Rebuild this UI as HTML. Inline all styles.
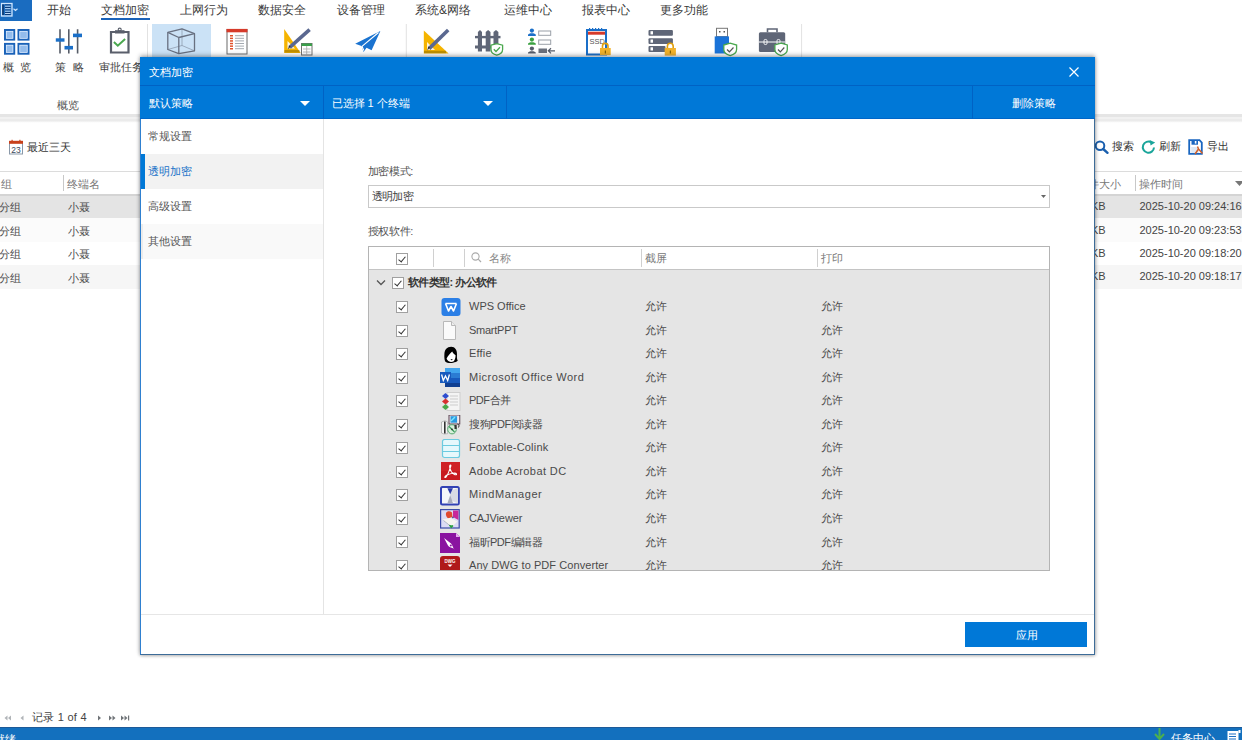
<!DOCTYPE html>
<html><head><meta charset="utf-8">
<style>
*{box-sizing:border-box}
html,body{margin:0;padding:0;width:1242px;height:740px;overflow:hidden;background:#fff;font-family:"Liberation Sans",sans-serif;color:#333}
.a{position:absolute;white-space:nowrap;line-height:1}
.menu{font-size:12px;color:#3a3a3a;top:3.5px}
.t12{font-size:12px}
.t11{font-size:11px}
.hdr{color:#777}
.cb{position:absolute;width:12px;height:12px;border:1px solid #a0a0a0;background:#fff}
.cb:after{content:"";position:absolute;left:3px;top:1px;width:3px;height:6px;border:solid #333;border-width:0 1.3px 1.3px 0;transform:rotate(40deg)}
</style></head><body>

<!-- ============ BACKGROUND APP ============ -->
<!-- top menu -->
<div class="a" style="left:0;top:0;width:32px;height:20.5px;background:#1a6cc0"></div>
<svg class="a" style="left:0;top:0" width="32" height="21" viewBox="0 0 32 21">
 <rect x="1.5" y="3.5" width="10.5" height="12.5" fill="none" stroke="#cfe6ff" stroke-width="1.3"/>
 <path d="M3 4.5V15" stroke="#0a2a5a" stroke-width="1.3"/>
 <path d="M5 5H10.5M5 7.5H10.5M5 10H10.5M5 12.5H10.5M5 14.5H10.5" stroke="#0a3a7a" stroke-width="1"/>
 <path d="M5 6.2H10.5M5 8.7H10.5M5 11.2H10.5M5 13.5H10.5" stroke="#cfe6ff" stroke-width="0.9"/>
 <path d="M13.5 8.8 L15.5 10.5 L17.5 8.8" fill="none" stroke="#cfe6ff" stroke-width="1.2"/>
</svg>
<div class="a menu" style="left:47px">开始</div>
<div class="a menu" style="left:101px">文档加密</div>
<div class="a" style="left:101px;top:18px;width:49px;height:2px;background:#1a62b8"></div>
<div class="a menu" style="left:180px">上网行为</div>
<div class="a menu" style="left:258px">数据安全</div>
<div class="a menu" style="left:337px">设备管理</div>
<div class="a menu" style="left:415px">系统&amp;网络</div>
<div class="a menu" style="left:504px">运维中心</div>
<div class="a menu" style="left:582px">报表中心</div>
<div class="a menu" style="left:660px">更多功能</div>

<!-- ribbon -->
<!-- ribbon icons -->
<div class="a" style="left:152px;top:24px;width:59px;height:34px;background:#cbe2f6"></div>
<svg class="a" style="left:0;top:20px" width="820" height="40" viewBox="0 20 820 40">
 <!-- overview grid -->
 <g stroke="#1a62b8" stroke-width="2" fill="#93bcec">
  <rect x="5" y="30" width="9.2" height="9.6"/><rect x="18.5" y="30" width="10" height="9.6"/>
  <rect x="5" y="43.9" width="9.2" height="9.8"/><rect x="18.5" y="43.9" width="10" height="9.8"/>
 </g>
 <g stroke="#e4efff" stroke-width="0.7" fill="none">
  <rect x="6.3" y="31.3" width="6.6" height="7"/><rect x="19.8" y="31.3" width="7.4" height="7"/>
  <rect x="6.3" y="45.2" width="6.6" height="7.2"/><rect x="19.8" y="45.2" width="7.4" height="7.2"/>
 </g>
 <!-- sliders -->
 <g stroke="#565c68" stroke-width="1.6"><path d="M60 29.3V53.6M68.8 29.3V53.6M77.6 29.3V53.6"/></g>
 <g fill="#1a6fc8"><rect x="55.8" y="38.3" width="8.7" height="3.4"/><rect x="64.5" y="45.9" width="8.5" height="3.6"/><rect x="73" y="33.6" width="9" height="3.6"/></g>
 <!-- clipboard -->
 <path d="M111 32 H128.5 V52.5 H111 Z" fill="#fff" stroke="#5a5f6b" stroke-width="2.2"/>
 <path d="M115 30.2 H124.5 V33.5 H115Z" fill="#5a5f6b"/>
 <circle cx="119.7" cy="29.6" r="1.5" fill="none" stroke="#5a5f6b" stroke-width="1.1"/>
 <path d="M113.9 42 L117.8 45.7 L125.1 38.9" fill="none" stroke="#4aa84e" stroke-width="2"/>
 <!-- cube -->
 <g fill="none" stroke="#687080" stroke-width="1.3" stroke-linejoin="round">
  <path d="M167.8 32.3 L182 28.9 L194.5 33.7 V50.8 L178.8 53.6 L167.8 49.5 Z"/>
  <path d="M167.8 32.3 L178.8 37.5 L194.5 33.7 M178.8 37.5 V53.6"/>
  <path d="M182 28.9 V45.5 L167.8 49.5 M182 45.5 L194.5 50.8" stroke-width="0.8" opacity="0.6"/>
 </g>
 <!-- doc list -->
 <rect x="227" y="29.5" width="20" height="24.5" fill="#fff" stroke="#6a6a6a" stroke-width="1"/>
 <rect x="226.5" y="28.9" width="21" height="3.4" fill="#d63a2a"/>
 <g fill="#e0502a"><rect x="230" y="35" width="3" height="1.5"/><rect x="230" y="37.6" width="3" height="1.5"/><rect x="230" y="40.2" width="3" height="1.5"/><rect x="230" y="42.8" width="3" height="1.5"/><rect x="230" y="45.4" width="3" height="1.5"/><rect x="230" y="48" width="3" height="1.5"/></g>
 <g stroke="#9aa0a8" stroke-width="0.9"><path d="M235 35.7H244M235 38.3H244M235 40.9H244M235 43.5H244M235 46.1H244M235 48.7H244"/></g>
 <!-- ruler pencil table -->
 <path d="M284.2 28.9 V52.9 H300.7 Z" fill="#f5b400"/>
 <path d="M287.5 41 V48.5 H295 Z" fill="#fff" opacity="0.9"/>
 <rect x="284.5" y="50" width="15" height="2.5" fill="#8a6a00" opacity="0.5"/>
 <path d="M309.6 29.6 L289.7 47.4" stroke="#5a6890" stroke-width="3.6" stroke-linecap="butt"/>
 <path d="M290.6 46.6 L288 49.5 L289 45.5Z" fill="#333"/>
 <rect x="301.5" y="43.5" width="10.5" height="11.5" fill="#fff" stroke="#707070" stroke-width="1"/>
 <rect x="301.5" y="43.5" width="10.5" height="2.5" fill="#3aa04a"/>
 <path d="M306.7 46V55M303 49H310.5M303 52H310.5" stroke="#aaa" stroke-width="0.8"/>
 <!-- paper plane -->
 <path d="M380.4 30.9 L355.2 43.7 L361.5 46 L363.6 52.1 L366.5 47.8 L371.6 50.3 Z" fill="#1a73d0"/>
 <path d="M380.4 30.9 L361.5 46 L363.6 52.1 Z" fill="#fff" opacity="0.0"/>
 <path d="M378.5 32.5 L362 46.3 L363.8 50.5" fill="none" stroke="#fff" stroke-width="1.1"/>
 <!-- separators -->
 <path d="M147.5 24 V57 M406.3 24 V57 M801.6 24 V57" stroke="#e2e2e2" stroke-width="1"/>
 <!-- ruler pencil 2 -->
 <path d="M423.8 30.4 V53.4 H448.6 Z" fill="#f5b400"/>
 <path d="M427 42 V50 H435 Z" fill="#fff" opacity="0.85"/>
 <rect x="424" y="50.8" width="22" height="2.4" fill="#8a6a00" opacity="0.5"/>
 <path d="M448.2 30 L429.1 48.6" stroke="#5a6890" stroke-width="3.6"/>
 <path d="M430 47.6 L427.2 50.6 L428.3 46.4Z" fill="#333"/>
 <!-- fence -->
 <g fill="#5f6677">
  <path d="M477.9 32 L480 29.9 L482 32 V51.6 H477.9Z"/>
  <path d="M485.7 32 L488.1 29.9 L490.5 32 V51.6 H485.7Z"/>
  <path d="M493.5 32 L496 29.9 L498.4 32 V51.6 H493.5Z"/>
  <rect x="475" y="35.9" width="25.5" height="2.4"/><rect x="475" y="45.5" width="25.5" height="3"/>
 </g>
 <path d="M491 45.2 L496.8 43.7 L502.6 45.2 V49.5 C502.6 52.5 499.5 54.5 496.8 55.2 C494 54.5 491 52.5 491 49.5Z" fill="#fff" stroke="#4aa84e" stroke-width="1.3"/>
 <path d="M493.8 49.3 L496 51.5 L500 47.3" fill="none" stroke="#4aa84e" stroke-width="1.3"/>
 <!-- users list -->
 <g><circle cx="531.9" cy="30.6" r="2.1" fill="#1a6fc8"/><path d="M528 36 V34.8 C528 32.6 535.8 32.6 535.8 34.8 V36Z" fill="#1a6fc8"/>
 <circle cx="531.9" cy="39.6" r="2.1" fill="#3aa040"/><path d="M528 44.8 V43.8 C528 41.6 535.8 41.6 535.8 43.8 V44.8Z" fill="#3aa040"/>
 <circle cx="531.9" cy="48.6" r="2.1" fill="#555c6a"/><path d="M528 53.6 V52.8 C528 50.6 535.8 50.6 535.8 52.8 V53.6Z" fill="#555c6a"/></g>
 <rect x="538.7" y="31" width="12" height="4.3" fill="none" stroke="#9aa0a8" stroke-width="1"/>
 <rect x="538.7" y="40" width="12" height="4.3" fill="none" stroke="#9aa0a8" stroke-width="1"/>
 <rect x="538.5" y="48.5" width="8.5" height="4.5" fill="#6a707c"/>
 <path d="M555 50.8 H548.5 M551 48.2 L548.3 50.8 L551 53.4" fill="none" stroke="#555c6a" stroke-width="1.2"/>
 <!-- SSD -->
 <rect x="587" y="30" width="19" height="24.5" fill="#fff" stroke="#1a6fc8" stroke-width="2"/>
 <rect x="588" y="31.7" width="17" height="3" fill="#d63a2a"/>
 <g fill="#1a6fc8"><rect x="589" y="28" width="1.2" height="3"/><rect x="592" y="28" width="1.2" height="3"/><rect x="595" y="28" width="1.2" height="3"/><rect x="598" y="28" width="1.2" height="3"/><rect x="601" y="28" width="1.2" height="3"/></g>
 <text x="589.5" y="44.3" font-family="Liberation Sans" font-size="7.5" fill="#555">SSD</text>
 <path d="M602.5 48 V46 C602.5 42.5 608 42.5 608 46 V48" fill="none" stroke="#e0a010" stroke-width="1.6"/>
 <rect x="600" y="48" width="10.7" height="7.2" fill="#f2b22a"/>
 <rect x="604.8" y="50.5" width="1.1" height="3" fill="#7a5a00"/>
 <!-- server -->
 <g fill="#5f6677"><rect x="648.5" y="29.9" width="24.4" height="5.8" rx="1"/><rect x="648.5" y="38.2" width="24.4" height="5.7" rx="1"/><rect x="648.5" y="46" width="17" height="5.9" rx="1"/></g>
 <g fill="#fff"><rect x="650.5" y="31.2" width="2.5" height="3.2"/><rect x="650.5" y="39.5" width="2.5" height="3.2"/><rect x="650.5" y="47.3" width="2.5" height="3.2"/></g>
 <path d="M667.4 48 V46.3 C667.4 42.2 673.2 42.2 673.2 46.3 V48" fill="none" stroke="#e0a010" stroke-width="1.6"/>
 <rect x="664.7" y="48" width="11.2" height="7.6" fill="#f2b22a"/>
 <rect x="669.8" y="50.5" width="1.1" height="3" fill="#7a5a00"/>
 <!-- USB -->
 <rect x="716.5" y="28.3" width="11" height="8.3" fill="#fff" stroke="#777" stroke-width="1"/>
 <rect x="719" y="31" width="1.5" height="1.5" fill="#555"/><rect x="723.5" y="31" width="1.5" height="1.5" fill="#555"/>
 <rect x="714.7" y="36.4" width="14.3" height="17.1" fill="#1a73d8"/>
 <path d="M723.8 45 L730.2 43.2 L736.6 45 V49.5 C736.6 52.6 733.2 54.8 730.2 55.6 C727.2 54.8 723.8 52.6 723.8 49.5Z" fill="#fff" stroke="#4aa84e" stroke-width="1.3"/>
 <path d="M727 49.5 L729.4 51.8 L733.5 47.5" fill="none" stroke="#555" stroke-width="1.2"/>
 <!-- briefcase -->
 <path d="M767.5 32.3 V29 H777 V32.3" fill="none" stroke="#5f6677" stroke-width="1.6"/>
 <rect x="758.9" y="32.3" width="26.3" height="19.6" rx="1.5" fill="#5f6677"/>
 <path d="M759 42 H785" stroke="#fff" stroke-width="1"/>
 <rect x="764" y="39.5" width="3" height="5" rx="1.2" fill="none" stroke="#fff" stroke-width="0.9"/>
 <rect x="777" y="39.5" width="3" height="5" rx="1.2" fill="none" stroke="#fff" stroke-width="0.9"/>
 <path d="M774.9 45 L781.1 43.2 L787.3 45 V49.5 C787.3 52.6 784 54.8 781.1 55.6 C778.2 54.8 774.9 52.6 774.9 49.5Z" fill="#fff" stroke="#4aa84e" stroke-width="1.3"/>
 <path d="M778 49.5 L780.3 51.8 L784.3 47.5" fill="none" stroke="#555" stroke-width="1.2"/>
</svg>
<div class="a t11" style="left:3px;top:62px;color:#444">概</div>
<div class="a t11" style="left:20px;top:62px;color:#444">览</div>
<div class="a t11" style="left:55px;top:62px;color:#444">策</div>
<div class="a t11" style="left:72.5px;top:62px;color:#444">略</div>
<div class="a t11" style="left:99px;top:62px;color:#444">审批任务</div>
<div class="a t11" style="left:57px;top:100px;color:#555">概览</div>


<!-- below ribbon line -->
<div class="a" style="left:0;top:113.5px;width:1242px;height:9px;background:linear-gradient(#e5e5e5 0,#e5e5e5 2.5px,#f1f1f1 2.5px,#f1f1f1 5px,#ebebeb 5px,#ebebeb 7px,#fafafa 8px,#fff 9px)"></div>


<!-- toolbar -->
<svg class="a" style="left:8px;top:139px" width="16" height="16" viewBox="0 0 16 16">
 <rect x="1.5" y="2.5" width="13" height="12.5" fill="#fff" stroke="#8a98a8" stroke-width="1"/>
 <rect x="1" y="1.8" width="14" height="3" fill="#c8401a"/>
 <rect x="3.5" y="0.8" width="1.2" height="2" fill="#c8401a"/><rect x="11.3" y="0.8" width="1.2" height="2" fill="#c8401a"/>
 <text x="8" y="13.5" font-family="Liberation Sans" font-size="8.5" fill="#3a4a5a" text-anchor="middle">23</text>
</svg>
<div class="a t11" style="left:26.5px;top:141.5px;color:#333">最近三天</div>
<!-- search -->
<svg class="a" style="left:1094px;top:140px" width="16" height="14" viewBox="0 0 16 14">
 <circle cx="6" cy="5.8" r="4.3" fill="none" stroke="#1a5fae" stroke-width="2"/>
 <path d="M9.2 9 L13.5 12.8" stroke="#1a5fae" stroke-width="2.4" stroke-linecap="round"/>
</svg>
<div class="a t11" style="left:1112px;top:141px;color:#333">搜索</div>
<!-- refresh -->
<svg class="a" style="left:1141px;top:139px" width="16" height="16" viewBox="0 0 16 16">
 <path d="M13 8.5 A5.6 5.6 0 1 1 10.2 3.3" fill="none" stroke="#1aa59a" stroke-width="2"/>
 <path d="M8.6 1 L14.2 3.6 L9.6 6.6 Z" fill="#1aa59a"/>
</svg>
<div class="a t11" style="left:1159px;top:141px;color:#333">刷新</div>
<!-- export -->
<svg class="a" style="left:1188px;top:139px" width="16" height="16" viewBox="0 0 16 16">
 <path d="M1.2 1.2 H11.5 L13.8 3.5 V14.8 H1.2 Z" fill="#fff" stroke="#1a66c0" stroke-width="1.8"/>
 <rect x="3.5" y="1.2" width="6.5" height="4.5" fill="#1a66c0"/>
 <rect x="6.8" y="2" width="1.6" height="2.6" fill="#fff"/>
 <rect x="3.2" y="8" width="7.5" height="6" fill="#dde8f5"/>
 <path d="M7 15 L10.5 10 L14.5 14.5 M10.5 10 L9.5 7.5" fill="none" stroke="#d0602a" stroke-width="1.5"/>
</svg>
<div class="a t11" style="left:1206.5px;top:141px;color:#333">导出</div>


<!-- table -->
<div class="a" style="left:0;top:171px;width:1242px;height:1px;background:#dcdcdc"></div>
<div class="a" style="left:0;top:194px;width:1242px;height:2px;background:#d4d4d4"></div>
<div class="a" style="left:63px;top:175px;width:1px;height:16px;background:#c8c8c8"></div>
<div class="a" style="left:1135px;top:175px;width:1px;height:16px;background:#c8c8c8"></div>
<div class="a t11 hdr" style="left:0.5px;top:179px">组</div>
<div class="a t11 hdr" style="left:67.3px;top:179px">终端名</div>
<div class="a t11 hdr" style="left:1088px;top:179px">件大小</div>
<div class="a t11 hdr" style="left:1139px;top:179px">操作时间</div>
<svg class="a" style="left:1235px;top:181px" width="9" height="6"><path d="M0 0H9L4.5 5Z" fill="#777"/></svg>

<div class="a" style="left:0;top:196px;width:1242px;height:22px;background:#e4e4e4"></div>
<div class="a" style="left:0;top:218px;width:1242px;height:23.5px;background:#fbfbfb"></div>
<div class="a" style="left:0;top:241.5px;width:1242px;height:23.5px;background:#fff"></div>
<div class="a" style="left:0;top:265px;width:1242px;height:23.5px;background:#f6f6f6"></div>
<div class="a t11" style="left:-1px;top:202.2px;color:#4c4c4c">分组</div>
<div class="a t11" style="left:67.5px;top:202.2px;color:#4c4c4c">小聂</div>
<div class="a t11" style="left:-1px;top:225.7px;color:#4c4c4c">分组</div>
<div class="a t11" style="left:67.5px;top:225.7px;color:#4c4c4c">小聂</div>
<div class="a t11" style="left:-1px;top:249.1px;color:#4c4c4c">分组</div>
<div class="a t11" style="left:67.5px;top:249.1px;color:#4c4c4c">小聂</div>
<div class="a t11" style="left:-1px;top:272.5px;color:#4c4c4c">分组</div>
<div class="a t11" style="left:67.5px;top:272.5px;color:#4c4c4c">小聂</div>
<div class="a t11" style="left:1091px;top:201px;color:#444">KB</div>
<div class="a t11" style="left:1139.5px;top:201px;color:#444">2025-10-20 09:24:16</div>
<div class="a t11" style="left:1091px;top:224.5px;color:#444">KB</div>
<div class="a t11" style="left:1139.5px;top:224.5px;color:#444">2025-10-20 09:23:53</div>
<div class="a t11" style="left:1091px;top:248px;color:#444">KB</div>
<div class="a t11" style="left:1139.5px;top:248px;color:#444">2025-10-20 09:18:20</div>
<div class="a t11" style="left:1091px;top:271.4px;color:#444">KB</div>
<div class="a t11" style="left:1139.5px;top:271.4px;color:#444">2025-10-20 09:18:17</div>

<!-- pager -->
<svg class="a" style="left:0;top:710px" width="140" height="16" viewBox="0 0 140 16">
 <g fill="#b0b4b8">
  <path d="M7.5 5.5 V10.5 L4.5 8Z"/><path d="M11 5.5 V10.5 L8 8Z"/>
  <path d="M23.5 5.5 V10.5 L20.5 8Z"/>
 </g>
 <g fill="#707478">
  <path d="M98 5.5 V10.5 L101 8Z"/>
  <path d="M109 5.5 V10.5 L112 8Z"/><path d="M112.5 5.5 V10.5 L115.5 8Z"/>
  <path d="M121 5.5 V10.5 L124 8Z"/><path d="M124.5 5.5 V10.5 L127.5 8Z"/><rect x="128" y="5.5" width="1.2" height="5"/>
 </g>
</svg>

<div class="a t11" style="left:32px;top:712px;color:#444;letter-spacing:0.25px">记录 1 of 4</div>

<!-- status bar -->
<div class="a" style="left:0;top:727px;width:1242px;height:13px;background:#1370be;overflow:hidden;border-top:1px solid #1d5a98">
<div class="a t11" style="left:-6px;top:5.5px;color:#fff">就绪</div>
<svg class="a" style="left:1153px;top:0px" width="13" height="13" viewBox="0 0 13 13"><path d="M6.5 0 V11 M2 6 L6.5 11 L11 6" fill="none" stroke="#4caf50" stroke-width="2"/></svg>
<div class="a t11" style="left:1171px;top:5px;color:#fff">任务中心</div>
<svg class="a" style="left:1227px;top:2px" width="14" height="11" viewBox="0 0 14 11"><rect x="0.5" y="1" width="11" height="10" fill="#fff"/><path d="M2 4H9M2 6.5H9M2 9H9" stroke="#1a6fc4" stroke-width="1"/><rect x="11.5" y="0" width="2" height="3" fill="#fff"/></svg>
</div>

<!-- ============ DIALOG ============ -->
<div class="a" style="left:140px;top:57px;width:955px;height:598px;box-shadow:0 -2px 4px rgba(40,50,60,0.35),1px 1px 3px rgba(0,0,0,0.15),-1px 1px 3px rgba(0,0,0,0.15);background:#fff;border:1px solid #2f80d0;border-bottom-color:#3d6c98;border-right-color:#3d6c98"></div>
<div class="a" style="left:140px;top:57px;width:955px;height:28px;background:#0078d7"></div>
<div class="a" style="left:140px;top:85px;width:955px;height:1px;background:#0062c4"></div>
<div class="a" style="left:140px;top:86px;width:955px;height:33px;background:#0078d7"></div>
<div class="a" style="left:140px;top:117.5px;width:955px;height:1px;background:#0066c8"></div>
<div class="a t11" style="left:148.5px;top:67px;color:#fff">文档加密</div>

<!-- sections -->
<!-- close X -->
<svg class="a" style="left:1069px;top:67px" width="10" height="10" viewBox="0 0 10 10"><path d="M0.5 0.5L9.5 9.5M9.5 0.5L0.5 9.5" stroke="#fff" stroke-width="1.2"/></svg>
<!-- second bar -->
<div class="a t11" style="left:148.5px;top:97.8px;color:#fff">默认策略</div>
<svg class="a" style="left:300px;top:101px" width="10" height="5"><path d="M0 0H10L5 5Z" fill="#fff"/></svg>
<div class="a" style="left:323px;top:86px;width:1px;height:33px;background:#0062c4"></div>
<div class="a t11" style="left:331.5px;top:98.3px;color:#fff">已选择 1 个终端</div>
<svg class="a" style="left:483px;top:101px" width="10" height="5"><path d="M0 0H10L5 5Z" fill="#fff"/></svg>
<div class="a" style="left:506px;top:86px;width:1px;height:33px;background:#0062c4"></div>
<div class="a" style="left:972px;top:86px;width:1px;height:33px;background:#0062c4"></div>
<div class="a t11" style="left:1012px;top:98.3px;color:#fff">删除策略</div>

<!-- left nav -->
<div class="a" style="left:141px;top:154px;width:182px;height:35px;background:#f2f2f2"></div>
<div class="a" style="left:141px;top:154px;width:4px;height:35px;background:#0078d7"></div>
<div class="a" style="left:141px;top:224px;width:182px;height:35px;background:#f9f9f9"></div>
<div class="a" style="left:141px;top:224px;width:2px;height:35px;background:#ececec"></div>
<div class="a t11" style="left:148px;top:131px;color:#555">常规设置</div>
<div class="a t11" style="left:148px;top:166px;color:#1a73c8">透明加密</div>
<div class="a t11" style="left:148px;top:201px;color:#555">高级设置</div>
<div class="a t11" style="left:148px;top:236px;color:#555">其他设置</div>
<div class="a" style="left:323px;top:119px;width:1px;height:496px;background:#e4e4e4"></div>

<div class="a" style="left:141px;top:614px;width:953px;height:1px;background:#e6e6e6"></div>
<div class="a" style="left:965px;top:622px;width:122px;height:24.5px;background:#0078d7"></div>
<div class="a t11" style="left:1015.5px;top:630px;color:#fff">应用</div>
<!-- content -->
<div class="a t11" style="left:367.5px;top:165.8px;color:#555;letter-spacing:-0.3px">加密模式:</div>
<div class="a" style="left:368px;top:185px;width:682px;height:23px;border:1px solid #c9c9c9;background:#fff"></div>
<div class="a t11" style="left:371.5px;top:190.8px;color:#444;letter-spacing:-0.6px">透明加密</div>
<svg class="a" style="left:1041px;top:195px" width="5" height="3"><path d="M0 0H5L2.5 3Z" fill="#666"/></svg>
<div class="a t11" style="left:367.5px;top:225.5px;color:#555;letter-spacing:-0.3px">授权软件:</div>

<!-- grid -->
<div class="a" style="left:368px;top:246px;width:682px;height:325px;border:1px solid #b4b4b4;background:#e5e5e5"></div>
<div class="a" style="left:369px;top:247px;width:680px;height:23px;background:#fff;border-bottom:1px solid #c4c4c4"></div>
<div class="a" style="left:433px;top:249px;width:1px;height:18px;background:#d0d0d0"></div>
<div class="a" style="left:464px;top:249px;width:1px;height:18px;background:#d0d0d0"></div>
<div class="a" style="left:641px;top:249px;width:1px;height:18px;background:#d0d0d0"></div>
<div class="a" style="left:817px;top:249px;width:1px;height:18px;background:#d0d0d0"></div>
<div class="cb" style="left:395.5px;top:252.5px"></div>
<svg class="a" style="left:471px;top:252px" width="11" height="12" viewBox="0 0 11 12"><circle cx="4.5" cy="4.5" r="3.6" fill="none" stroke="#aaa" stroke-width="1.1"/><path d="M7.2 7.2L10 10" stroke="#aaa" stroke-width="1.2"/></svg>
<div class="a t11" style="left:489px;top:253px;color:#888">名称</div>
<div class="a t11" style="left:645px;top:253px;color:#777">截屏</div>
<div class="a t11" style="left:821px;top:253px;color:#777">打印</div>

<div class="a" style="left:0;top:0;width:1242px;height:740px;clip-path:inset(269px 193px 170px 369px)">
<svg class="a" style="left:376px;top:279px" width="10" height="7" viewBox="0 0 10 7"><path d="M1 1.5 L5 5.5 L9 1.5" fill="none" stroke="#555" stroke-width="1.3"/></svg>
<div class="cb" style="left:392px;top:276.5px"></div>
<div class="a t11" style="left:408px;top:277px;color:#333;font-weight:bold;letter-spacing:-0.6px">软件类型: 办公软件</div>
<div class="cb" style="left:396px;top:301.00px"></div>
<svg class="a" style="left:441.2px;top:298px" width="20" height="20" viewBox="0 0 20 20"><rect x="0.5" y="0" width="19" height="18" rx="3" fill="#2b7fe6"/><path d="M4.5 5.5 L7.5 13 L10 8.5 L12.5 13 L15.5 5.5 M4.5 5.5 H15.5" fill="none" stroke="#fff" stroke-width="1.6" stroke-linejoin="round"/></svg>
<div class="a t11" style="left:469px;top:301.10px;color:#4a4a4a;letter-spacing:0px">WPS Office</div>
<div class="a t11" style="left:645px;top:301.10px;color:#4a4a4a">允许</div>
<div class="a t11" style="left:821px;top:301.10px;color:#4a4a4a">允许</div>
<div class="cb" style="left:396px;top:324.55px"></div>
<svg class="a" style="left:441px;top:321.3px" width="20" height="20" viewBox="0 0 20 20"><path d="M2.5 0.5 H10.5 L14.5 4.5 V18.5 H2.5 Z" fill="#fafafa" stroke="#b8b8b8"/><path d="M10.5 0.5 V4.5 H14.5" fill="#eee" stroke="#b8b8b8"/></svg>
<div class="a t11" style="left:469px;top:324.65px;color:#4a4a4a;letter-spacing:-0.25px">SmartPPT</div>
<div class="a t11" style="left:645px;top:324.65px;color:#4a4a4a">允许</div>
<div class="a t11" style="left:821px;top:324.65px;color:#4a4a4a">允许</div>
<div class="cb" style="left:396px;top:348.09px"></div>
<svg class="a" style="left:440.5px;top:345.5px" width="20" height="20" viewBox="0 0 20 20"><path d="M10.2 0.8 C6 0.8 3.6 3.8 3.4 8 C3.2 11 3.4 13.8 4.2 15.6 C6 17.2 9.5 17.4 12 16.8 C14 16.4 16.2 15.8 16.8 14.6 C15.8 13.5 15.9 11 16 8.5 C16.1 4 14 0.8 10.2 0.8Z" fill="#000"/><path d="M5.6 12.6 C7 10 9 7.5 11.2 5.6 C12 7.2 13.4 8.6 14.6 9.3 C14.6 11.5 14 13.8 12.8 15.2 C11.5 16 9.5 16.2 8.3 15.6 C7 15 6 13.8 5.6 12.6Z" fill="#fff"/><ellipse cx="10.6" cy="13.6" rx="1" ry="0.55" fill="#222"/></svg>
<div class="a t11" style="left:469px;top:348.19px;color:#4a4a4a;letter-spacing:0.2px">Effie</div>
<div class="a t11" style="left:645px;top:348.19px;color:#4a4a4a">允许</div>
<div class="a t11" style="left:821px;top:348.19px;color:#4a4a4a">允许</div>
<div class="cb" style="left:396px;top:371.63px"></div>
<svg class="a" style="left:440px;top:368px" width="20" height="20" viewBox="0 0 20 20"><rect x="5" y="0" width="15" height="19" fill="#1857b8"/><rect x="5" y="0" width="15" height="5" fill="#41a5ee"/><rect x="5" y="5" width="15" height="5" fill="#2b7cd3"/><rect x="5" y="10" width="15" height="5" fill="#185abd"/><rect x="5" y="15" width="15" height="4" fill="#103f91"/><rect x="0" y="4" width="11" height="11" fill="#185abd"/><path d="M1.6 6.5 L3.3 12.5 L5.5 8 L7.7 12.5 L9.4 6.5" fill="none" stroke="#fff" stroke-width="1.3"/></svg>
<div class="a t11" style="left:469px;top:371.74px;color:#4a4a4a;letter-spacing:0.47px">Microsoft Office Word</div>
<div class="a t11" style="left:645px;top:371.74px;color:#4a4a4a">允许</div>
<div class="a t11" style="left:821px;top:371.74px;color:#4a4a4a">允许</div>
<div class="cb" style="left:396px;top:395.18px"></div>
<svg class="a" style="left:441px;top:392px" width="20" height="20" viewBox="0 0 20 20"><rect x="6" y="0.5" width="13" height="18" fill="#f4f4f4" stroke="#cfcfcf"/><path d="M9 4H17M9 7H17M9 10H17M9 13H17" stroke="#ccc"/><path d="M1 4 L4.5 1 L8 4 L4.5 7Z" fill="#2f4fd0"/><path d="M1 9.5 L4.5 6.5 L8 9.5 L4.5 12.5Z" fill="#d83030"/><path d="M1 15 L4.5 12 L8 15 L4.5 18Z" fill="#4aa84a"/></svg>
<div class="a t11" style="left:469px;top:395.28px;color:#4a4a4a;letter-spacing:-0.5px">PDF合并</div>
<div class="a t11" style="left:645px;top:395.28px;color:#4a4a4a">允许</div>
<div class="a t11" style="left:821px;top:395.28px;color:#4a4a4a">允许</div>
<div class="cb" style="left:396px;top:418.73px"></div>
<svg class="a" style="left:441px;top:415.3px" width="20" height="20" viewBox="0 0 20 20"><path d="M0.5 7 L4 5.7 L6.7 7 V18.7 L3 19 L0.5 18Z" fill="#f4f4f4" stroke="#888" stroke-width="0.5"/><path d="M3.8 6.5 V18.5" stroke="#333" stroke-width="1.6"/><rect x="8" y="0" width="10.8" height="9" fill="#f0eaf0" stroke="#4a3040" stroke-width="0.9"/><rect x="9.5" y="1.2" width="6.6" height="6.5" fill="#2a9ae0"/><path d="M10 6 L14 2" stroke="#7ae8ff" stroke-width="1.5"/><path d="M16.5 9 C18.5 9.5 18.5 12 17 12.5" fill="none" stroke="#333" stroke-width="1"/><ellipse cx="11" cy="14.3" rx="4.3" ry="4.6" fill="#d8f0dc" stroke="#58a870" stroke-width="1"/><path d="M8 11.5 L13.5 17" stroke="#3a9a5a" stroke-width="1.3"/><circle cx="11" cy="14.3" r="0.9" fill="#333"/><rect x="13.5" y="10" width="2.2" height="4" fill="#333"/></svg>
<div class="a t11" style="left:469px;top:418.83px;color:#4a4a4a;letter-spacing:-0.45px">搜狗PDF阅读器</div>
<div class="a t11" style="left:645px;top:418.83px;color:#4a4a4a">允许</div>
<div class="a t11" style="left:821px;top:418.83px;color:#4a4a4a">允许</div>
<div class="cb" style="left:396px;top:442.27px"></div>
<svg class="a" style="left:440.5px;top:439.3px" width="20" height="20" viewBox="0 0 20 20"><rect x="1.5" y="0.5" width="17" height="18" rx="2" fill="#e6f8fc" stroke="#6ccbe0" stroke-width="1.2"/><path d="M1.5 6.5H18.5M1.5 12.5H18.5" stroke="#6ccbe0" stroke-width="1.2"/></svg>
<div class="a t11" style="left:469px;top:442.37px;color:#4a4a4a;letter-spacing:0.2px">Foxtable-Colink</div>
<div class="a t11" style="left:645px;top:442.37px;color:#4a4a4a">允许</div>
<div class="a t11" style="left:821px;top:442.37px;color:#4a4a4a">允许</div>
<div class="cb" style="left:396px;top:465.81px"></div>
<svg class="a" style="left:441px;top:462px" width="20" height="20" viewBox="0 0 20 20"><rect x="0" y="0" width="19" height="18" fill="#c8191f"/><rect x="0" y="0" width="19" height="9" fill="#d62a2a" opacity="0.5"/><path d="M9.5 3 C8 3 8.6 7 10.5 10 C12.5 13 16 13.5 15.5 12 C15 10.5 10 11 6 13 C3 14.5 3.5 16.5 5 15 C7 13 8.5 8 9.5 5 C10 3.5 10 3 9.5 3Z" fill="none" stroke="#fff" stroke-width="1.1"/></svg>
<div class="a t11" style="left:469px;top:465.92px;color:#4a4a4a;letter-spacing:0.4px">Adobe Acrobat DC</div>
<div class="a t11" style="left:645px;top:465.92px;color:#4a4a4a">允许</div>
<div class="a t11" style="left:821px;top:465.92px;color:#4a4a4a">允许</div>
<div class="cb" style="left:396px;top:489.36px"></div>
<svg class="a" style="left:440.3px;top:485.6px" width="20" height="20" viewBox="0 0 20 20"><rect x="1" y="1" width="17.8" height="17.4" rx="1.5" fill="#f4f6fa" stroke="#3242b4" stroke-width="2"/><path d="M10.2 5 L18 2 V17.5 L10.2 14Z" fill="#d8dbe4"/><path d="M7.4 2.2 H13 L10.2 8.3Z" fill="#2a3aa8"/><path d="M7.4 17.2 H13 L10.2 9.2Z" fill="#a8acbc"/></svg>
<div class="a t11" style="left:469px;top:489.46px;color:#4a4a4a;letter-spacing:0.55px">MindManager</div>
<div class="a t11" style="left:645px;top:489.46px;color:#4a4a4a">允许</div>
<div class="a t11" style="left:821px;top:489.46px;color:#4a4a4a">允许</div>
<div class="cb" style="left:396px;top:512.90px"></div>
<svg class="a" style="left:440.3px;top:508.8px" width="20" height="20" viewBox="0 0 20 20"><rect x="0.6" y="0.6" width="18.6" height="18.4" fill="#dcdcf4" stroke="#3a4aa8" stroke-width="1.2"/><path d="M6 4 C7 2 10 1.8 12 3.5 L12.5 8 L8 9.5 C6.5 8 5.5 6 6 4Z" fill="#e04a30"/><path d="M13 1.6 L18.4 1.6 L18.4 11 L13 8Z" fill="#c8289a"/><path d="M12 7.5 L14 8.5 L12.5 9.5Z" fill="#203080"/><path d="M2.6 10.6 L10.5 8.8 L17.4 12.6 L11.3 18.4Z" fill="#f6f4f0"/><path d="M3.5 11.5 L11 17.5" stroke="#a0a8b8" stroke-width="0.8"/><path d="M9.4 16 L11.2 18.6 L13 16.5" fill="#2aa040" stroke="#2aa040" stroke-width="1.2"/></svg>
<div class="a t11" style="left:469px;top:513.01px;color:#4a4a4a;letter-spacing:-0.1px">CAJViewer</div>
<div class="a t11" style="left:645px;top:513.01px;color:#4a4a4a">允许</div>
<div class="a t11" style="left:821px;top:513.01px;color:#4a4a4a">允许</div>
<div class="cb" style="left:396px;top:536.45px"></div>
<svg class="a" style="left:440.3px;top:532.5px" width="20" height="20" viewBox="0 0 20 20"><path d="M0 0 H16 L20 4 V20 H0Z" fill="#8a14a0"/><path d="M16 0 V4 H20" fill="#e8a8f0"/><path d="M4 5 L11 10.5 C12.5 12 12.5 14 14 16 L15 17 L13.5 15.5 C11 14.5 9 14 8 12.5Z" fill="#fff"/><circle cx="10.8" cy="12.5" r="1" fill="#8a14a0"/></svg>
<div class="a t11" style="left:469px;top:536.55px;color:#4a4a4a;letter-spacing:-0.5px">福昕PDF编辑器</div>
<div class="a t11" style="left:645px;top:536.55px;color:#4a4a4a">允许</div>
<div class="a t11" style="left:821px;top:536.55px;color:#4a4a4a">允许</div>
<div class="cb" style="left:396px;top:560.00px"></div>
<svg class="a" style="left:440.3px;top:556.2px" width="20" height="20" viewBox="0 0 20 20"><rect x="0" y="0" width="20" height="20" rx="3" fill="#b01a1a"/><text x="10" y="6.5" font-size="4.5" font-family="Liberation Sans" font-weight="bold" fill="#fff" text-anchor="middle">DWG</text><path d="M7.5 8.5 H12.5 L10 11Z" fill="#fff"/></svg>
<div class="a t11" style="left:469px;top:560.10px;color:#4a4a4a;letter-spacing:0.07px">Any DWG to PDF Converter</div>
<div class="a t11" style="left:645px;top:560.10px;color:#4a4a4a">允许</div>
<div class="a t11" style="left:821px;top:560.10px;color:#4a4a4a">允许</div>
</div>

</body></html>
